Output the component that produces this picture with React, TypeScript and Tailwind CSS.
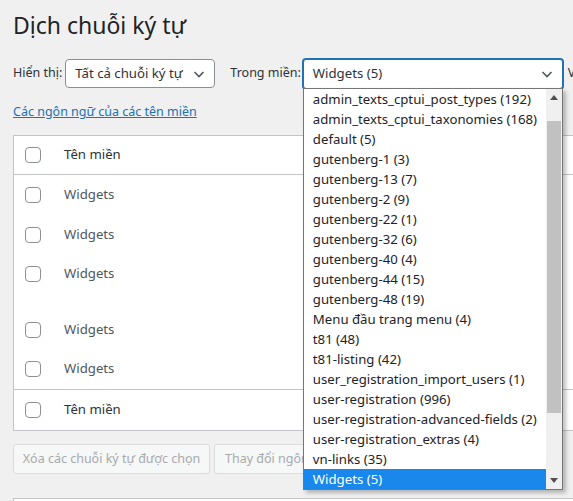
import React from 'react';

const domains = [
  'admin_texts_cptui_post_types (192)',
  'admin_texts_cptui_taxonomies (168)',
  'default (5)',
  'gutenberg-1 (3)',
  'gutenberg-13 (7)',
  'gutenberg-2 (9)',
  'gutenberg-22 (1)',
  'gutenberg-32 (6)',
  'gutenberg-40 (4)',
  'gutenberg-44 (15)',
  'gutenberg-48 (19)',
  'Menu đầu trang menu (4)',
  't81 (48)',
  't81-listing (42)',
  'user_registration_import_users (1)',
  'user-registration (996)',
  'user-registration-advanced-fields (2)',
  'user-registration_extras (4)',
  'vn-links (35)',
  'Widgets (5)',
];

function Chevron() {
  return (
    <svg width="16" height="16" viewBox="0 0 16 16" className="shrink-0">
      <path d="M3.5 6l4.5 4.5L12.5 6" fill="none" stroke="#50575e" strokeWidth="1.6" />
    </svg>
  );
}

function Checkbox() {
  return <span className="block h-4 w-4 shrink-0 rounded-[4px] border border-[#8c8f94] bg-white" />;
}

const rowHeights = ['h-[40px]', 'h-[39px]', 'h-[56px]', 'h-[39px]', 'h-[40px]'];

export default function App() {
  return (
    <div className="relative h-[501px] w-[573px] overflow-hidden bg-[#f0f0f1] font-['Noto_Sans',sans-serif] text-[#3c434a]">
      <div className="w-[860px] pl-[13px]">
        <h1 className="pt-[9px] text-[23px] leading-[32px] text-[#1d2327]">Dịch chuỗi ký tự</h1>

        <div className="mt-[18px] flex h-[29px] items-center text-[12.5px]">
          <span className="mr-[3px] text-[#2c3338]">Hiển thị:</span>
          <div className="flex h-[29px] w-[150px] items-center justify-between rounded-[4px] border border-[#8c8f94] bg-white pl-[9px] pr-[7px] text-[13.2px] text-[#2c3338]">
            <span>Tất cả chuỗi ký tự</span>
            <Chevron />
          </div>
          <span className="ml-[15px] mr-[2px] text-[#2c3338]">Trong miền:</span>
          <div className="relative">
            <div className="flex h-[30px] w-[260px] items-center justify-between rounded-[3px] border border-[#2271b1] bg-white pl-[9px] pr-[7px] text-[13.2px] text-[#2c3338] shadow-[0_0_0_1px_#2271b1]">
              <span>Widgets (5)</span>
              <Chevron />
            </div>
            <div className="absolute left-0 top-[29px] z-10 flex w-[260px] border border-[#767676] bg-white shadow-[3px_3px_4px_rgba(0,0,0,0.25)]">
              <ul className="flex-1 text-[13.2px] leading-[20px] text-[#1d2327]">
                {domains.map((d, i) => (
                  <li
                    key={d}
                    className={
                      i === domains.length - 1
                        ? 'h-[20px] whitespace-nowrap bg-[#1a87ec] pl-[9px] text-white'
                        : 'h-[20px] whitespace-nowrap pl-[9px]'
                    }
                  >
                    {d}
                  </li>
                ))}
              </ul>
              <div className="flex w-[16px] flex-col bg-[#f0f0f0]">
                <div className="flex h-[17px] items-center justify-center">
                  <svg width="8" height="5" viewBox="0 0 8 5"><path d="M0 5L4 0L8 5Z" fill="#505050" /></svg>
                </div>
                <div className="mx-[1px] mt-[15px] h-[292px] bg-[#c1c1c1]" />
                <div className="flex-1" />
                <div className="flex h-[17px] items-center justify-center">
                  <svg width="8" height="5" viewBox="0 0 8 5"><path d="M0 0L4 5L8 0Z" fill="#505050" /></svg>
                </div>
              </div>
            </div>
          </div>
          <span className="ml-[5px] text-[#2c3338]">Văn bản</span>
        </div>

        <a href="#" className="mt-[14px] block text-[12.5px] leading-[20px] text-[#2271b1] underline">
          Các ngôn ngữ của các tên miền
        </a>

        <div className="mt-[13px] border border-[#c3c4c7] bg-white text-[13.2px]">
          <div className="flex h-[39px] items-center gap-[23px] border-b border-[#c3c4c7] pl-[11px] text-[#2c3338]">
            <Checkbox />
            <span>Tên miền</span>
          </div>
          {rowHeights.map((h, i) => (
            <div key={i} className={`flex items-start gap-[23px] pl-[11px] ${h}`}>
              <span className="mt-[12px]"><Checkbox /></span>
              <span className="pt-[9px] leading-[20px] text-[#50575e]">Widgets</span>
            </div>
          ))}
          <div className="flex h-[41px] items-center gap-[23px] border-t border-[#c3c4c7] pl-[11px] text-[#2c3338]">
            <Checkbox />
            <span>Tên miền</span>
          </div>
        </div>

        <div className="mt-[13px] flex gap-[4px] text-[12.5px] text-[#a7aaad]">
          <button className="h-[30px] w-[197px] rounded-[3px] border border-[#dcdcde] bg-[#f6f7f7]">
            Xóa các chuỗi ký tự được chọn
          </button>
          <button className="h-[30px] rounded-[3px] border border-[#dcdcde] bg-[#f6f7f7] px-[10px]">
            Thay đổi ngôn ngữ của các chuỗi ký tự được chọn
          </button>
        </div>

        <div className="mt-[24px] h-[20px] border border-[#c3c4c7] bg-white" />
      </div>

      <svg className="pointer-events-none absolute left-0 top-0" width="573" height="501" viewBox="0 0 573 501">
        <line x1="452" y1="405" x2="405" y2="466" stroke="#ea1c1c" strokeWidth="4" strokeLinecap="round" />
        <polygon points="394,484 398,456 414,468" fill="#ea1c1c" />
      </svg>
    </div>
  );
}
